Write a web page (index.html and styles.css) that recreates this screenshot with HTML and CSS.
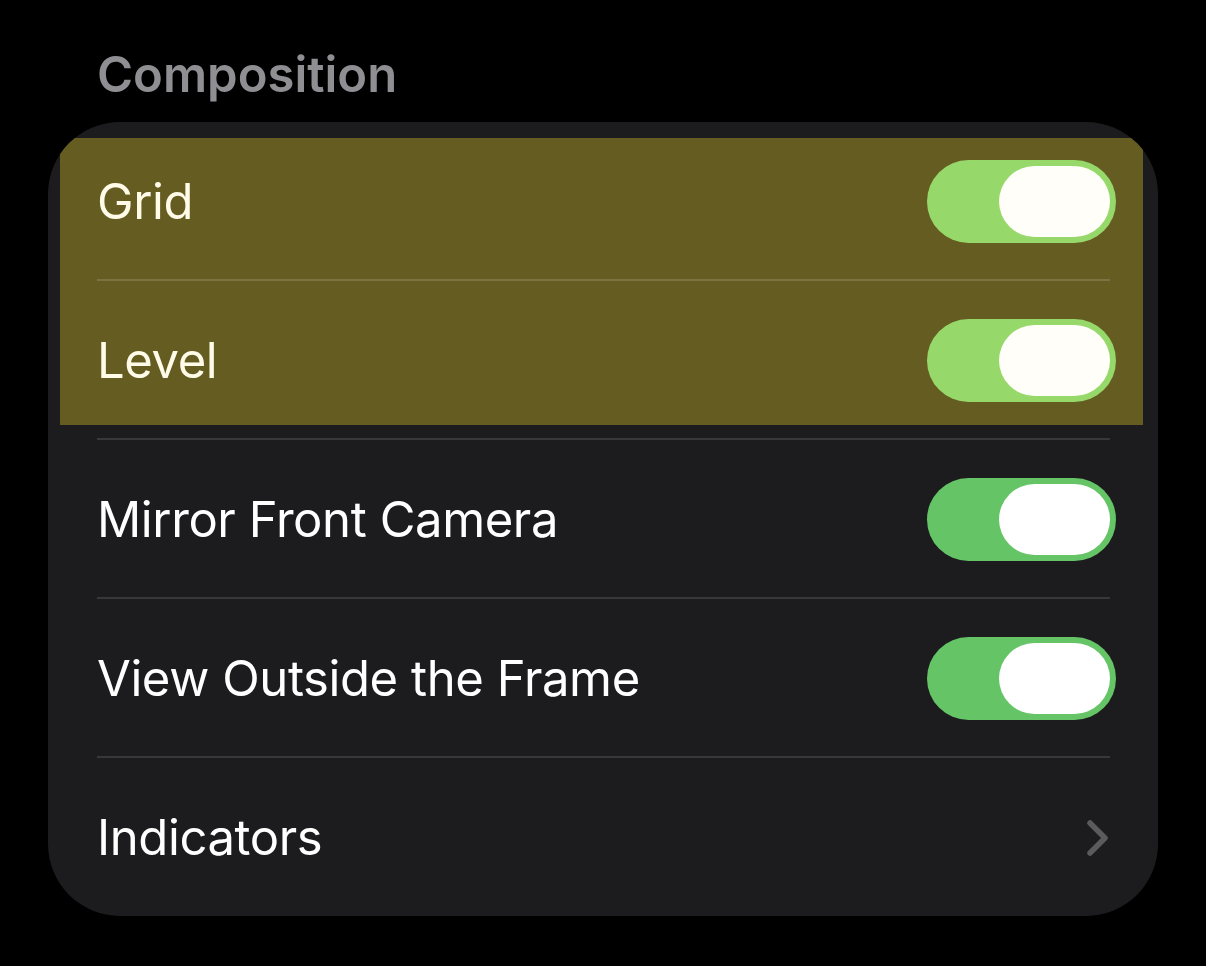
FILE: index.html
```html
<!DOCTYPE html>
<html lang="en">
<head>
<meta charset="utf-8">
<title>Composition</title>
<link rel="stylesheet" href="styles.css">
</head>
<body>
<div class="page">
  <div class="header">Composition</div>
  <div class="card">
    <div class="highlight"></div>
    <div class="row hl">
      <span class="label">Grid</span>
      <span class="toggle"><span class="knob"></span></span>
    </div>
    <div class="row hl">
      <span class="label">Level</span>
      <span class="toggle"><span class="knob"></span></span>
    </div>
    <div class="row">
      <span class="label">Mirror Front Camera</span>
      <span class="toggle"><span class="knob"></span></span>
    </div>
    <div class="row">
      <span class="label">View Outside the Frame</span>
      <span class="toggle"><span class="knob"></span></span>
    </div>
    <div class="row last">
      <span class="label">Indicators</span>
      <svg class="chev" width="24" height="38" viewBox="0 0 24 38"><path d="M4 4 L19 19 L4 34" fill="none" stroke="#5b5b5f" stroke-width="5.5" stroke-linecap="round" stroke-linejoin="round"/></svg>
    </div>
  </div>
</div>
</body>
</html>
```
FILE: styles.css
```css
html, body {
  margin: 0;
  padding: 0;
  background: #000;
}
body {
  width: 1206px;
  height: 966px;
  overflow: hidden;
  font-family: Inter, "Liberation Sans", sans-serif;
}
.page {
  padding-left: 48px;
}
.header {
  height: 122px;
  box-sizing: border-box;
  padding-left: 49px;
  padding-top: 47px;
  font-size: 49px;
  line-height: 56px;
  font-weight: 600;
  color: #8e8e93;
  letter-spacing: 0;
}
.card {
  position: relative;
  width: 1110px;
  height: 794px;
  border-radius: 72px;
  background: #1c1c1e;
  overflow: hidden;
}
.highlight {
  position: absolute;
  left: 12px;
  top: 16px;
  width: 1083px;
  height: 287px;
  background: #655c22;
  z-index: 0;
}
.row {
  position: relative;
  z-index: 1;
  height: 155px;
  margin-left: 49px;
  margin-right: 48px;
  border-bottom: 2px solid #38383a;
  display: flex;
  align-items: center;
  justify-content: space-between;
  padding-top: 2px;
  box-sizing: content-box;
}
.row.last {
  border-bottom: none;
}
.label {
  font-size: 49px;
  color: #fff;
  letter-spacing: -0.4px;
}
.toggle {
  width: 189px;
  height: 83px;
  border-radius: 42px;
  background: #65c466;
  margin-right: -6px;
  display: flex;
  align-items: center;
  justify-content: flex-end;
  padding-right: 6px;
  box-sizing: border-box;
}
.knob {
  width: 111px;
  height: 71px;
  border-radius: 36px;
  background: #fff;
}
.row.hl .label {
  color: #fffbe8;
}
.row.hl .toggle {
  background: #97d86a;
}
.row.hl .knob {
  background: #fffef8;
}
.row.hl {
  border-bottom-color: #7a7344;
}
.row.hl + .row.hl {
  border-bottom-color: #38383a;
}
```
